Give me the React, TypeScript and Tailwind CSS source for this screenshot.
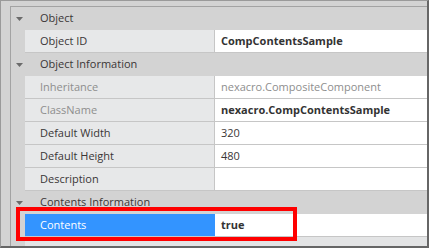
import React from "react";

type Row =
  | { kind: "group"; label: string }
  | {
      kind: "item";
      name: string;
      value?: string;
      readonly?: boolean;
      bold?: boolean;
      valueGray?: boolean;
      selected?: boolean;
    };

const rows: Row[] = [
  { kind: "group", label: "Object" },
  { kind: "item", name: "Object ID", value: "CompContentsSample", bold: true },
  { kind: "group", label: "Object Information" },
  { kind: "item", name: "Inheritance", value: "nexacro.CompositeComponent", readonly: true, valueGray: true },
  { kind: "item", name: "ClassName", value: "nexacro.CompContentsSample", readonly: true, bold: true },
  { kind: "item", name: "Default Width", value: "320" },
  { kind: "item", name: "Default Height", value: "480" },
  { kind: "item", name: "Description", value: "" },
  { kind: "group", label: "Contents Information" },
  { kind: "item", name: "Contents", value: "true", bold: true, selected: true },
];

function Arrow() {
  return (
    <svg width="7" height="4" viewBox="0 0 7 4" className="block">
      <path d="M0 0 H7 L3.5 4 Z" fill="#6b6b6b" />
    </svg>
  );
}

export default function App() {
  return (
    <div
      className="relative w-[429px] h-[248px] bg-[#d3d3d3] border-l border-t border-[#9a9a9a] border-r-2 border-b-2 border-r-[#666666] border-b-[#666666] pl-[9px] pt-[5px] overflow-hidden"
      style={{ fontFamily: '"Open Sans", "Noto Sans", sans-serif' }}
    >
      <div className="flex flex-col h-full border-l border-t border-[#a3a3a3] bg-[#d3d3d3] text-[11px]">
        {rows.map((r, i) =>
          r.kind === "group" ? (
            <div key={i} className="flex h-[23px] items-center bg-[#d3d3d3]">
              <div className="w-[14px] flex justify-center pl-[2px]">
                <Arrow />
              </div>
              <div className="pl-[15px] text-[#3a3636]">{r.label}</div>
            </div>
          ) : (
            <div key={i} className="flex h-[23px]">
              <div className="w-[14px] shrink-0 bg-[#d3d3d3]" />
              <div className="flex flex-1 border-b border-[#c6c6c6]">
                <div
                  className={
                    "w-[189px] shrink-0 flex items-center pl-[15px] " +
                    (r.selected
                      ? "bg-[#3394ff] text-white"
                      : r.readonly
                      ? "bg-[#e7e8e9] text-[#8e8e8e]"
                      : "bg-[#e7e8e9] text-[#3a3636]")
                  }
                >
                  {r.name}
                </div>
                <div
                  className={
                    "w-[1px] shrink-0 " + (r.selected ? "bg-[#3394ff]" : "bg-[#c6c6c6]")
                  }
                />
                <div
                  className={
                    "flex-1 flex items-center pl-[6px] bg-white " +
                    (r.bold ? "font-bold " : "") +
                    (r.valueGray ? "text-[#8e8e8e]" : r.bold ? "text-[#333333]" : "text-[#3a3636]")
                  }
                >
                  {r.value}
                </div>
              </div>
            </div>
          )
        )}
        <div className="flex flex-1">
          <div className="w-[14px] shrink-0 bg-[#d3d3d3]" />
          <div className="flex-1 bg-[#e3e4e5]" />
        </div>
      </div>
      <div className="absolute left-[15px] top-[206px] w-[281px] h-[34px] border-4 border-[#ff0000]" />
    </div>
  );
}
